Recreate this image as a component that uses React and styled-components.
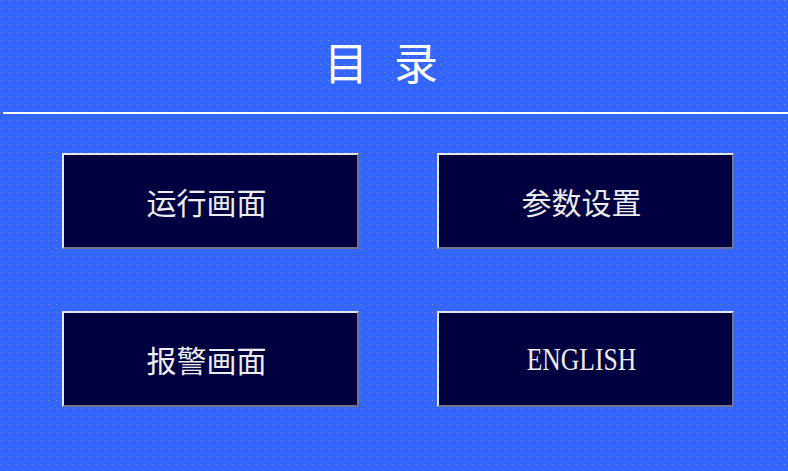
import React from "react";
import styled, { createGlobalStyle } from "styled-components";

// 画面底色 + 点阵网格（每 8px 一个灰点）
const GlobalStyle = createGlobalStyle`
  html, body {
    margin: 0;
    padding: 0;
  }
  body {
    background-color: #3366ff;
    background-image:
      linear-gradient(#3366ff 7px, transparent 7px),
      linear-gradient(to right, #3366ff 7px, #7f86b8 7px);
    background-size: 8px 8px;
    background-position: 1px 1px;
    font-family: "Noto Sans CJK SC", "Noto Sans", sans-serif;
  }
`;

const Screen = styled.div`
  width: 788px;
  height: 471px;
  display: flex;
  flex-direction: column;
`;

const Header = styled.div`
  height: 112px;
  box-sizing: border-box;
  padding-top: 10px;
  display: flex;
  align-items: center;
  justify-content: center;
`;

const Title = styled.h1`
  margin: 0;
  font-family: "Noto Sans CJK SC", sans-serif;
  font-weight: 400;
  font-size: 44px;
  line-height: 1;
  letter-spacing: 26px;
  color: #ffffff;
`;

const Divider = styled.div`
  height: 2px;
  margin-left: 3px;
  background: #ffffff;
`;

const Menu = styled.div`
  display: grid;
  grid-template-columns: 297px 297px;
  grid-auto-rows: 96px;
  column-gap: 78px;
  row-gap: 62px;
  padding: 39px 0 0 62px;
`;

// 立体边框按钮：左上亮，右下暗
const MenuButton = styled.button`
  box-sizing: border-box;
  display: flex;
  align-items: center;
  justify-content: center;
  padding: 0;
  margin: 0;
  background: #000040;
  border-style: solid;
  border-width: 2px;
  border-color: #e4e4ee #74748a #74748a #e4e4ee;
  color: #ececf2;
  font-family: ${(p) =>
    p.$latin ? '"Liberation Serif", serif' : '"Noto Sans CJK SC", sans-serif'};
  font-size: ${(p) => (p.$latin ? "32px" : "30px")};
  font-weight: 400;
  cursor: pointer;
`;

const Label = styled.span`
  display: inline-block;
  transform: ${(p) => (p.$latin ? "scaleX(0.8)" : "none")};
  margin-left: -8px;
`;

const items = [
  { id: 1, text: "运行画面" },
  { id: 2, text: "参数设置" },
  { id: 3, text: "报警画面" },
  { id: 4, text: "ENGLISH", latin: true },
];

const App = () => {
  return (
    <>
      <GlobalStyle />
      <Screen>
        <Header>
          <Title>目录</Title>
        </Header>
        <Divider />
        <Menu>
          {items.map((item) => (
            <MenuButton key={item.id} $latin={item.latin}>
              <Label $latin={item.latin}>{item.text}</Label>
            </MenuButton>
          ))}
        </Menu>
      </Screen>
    </>
  );
};

export default App;
